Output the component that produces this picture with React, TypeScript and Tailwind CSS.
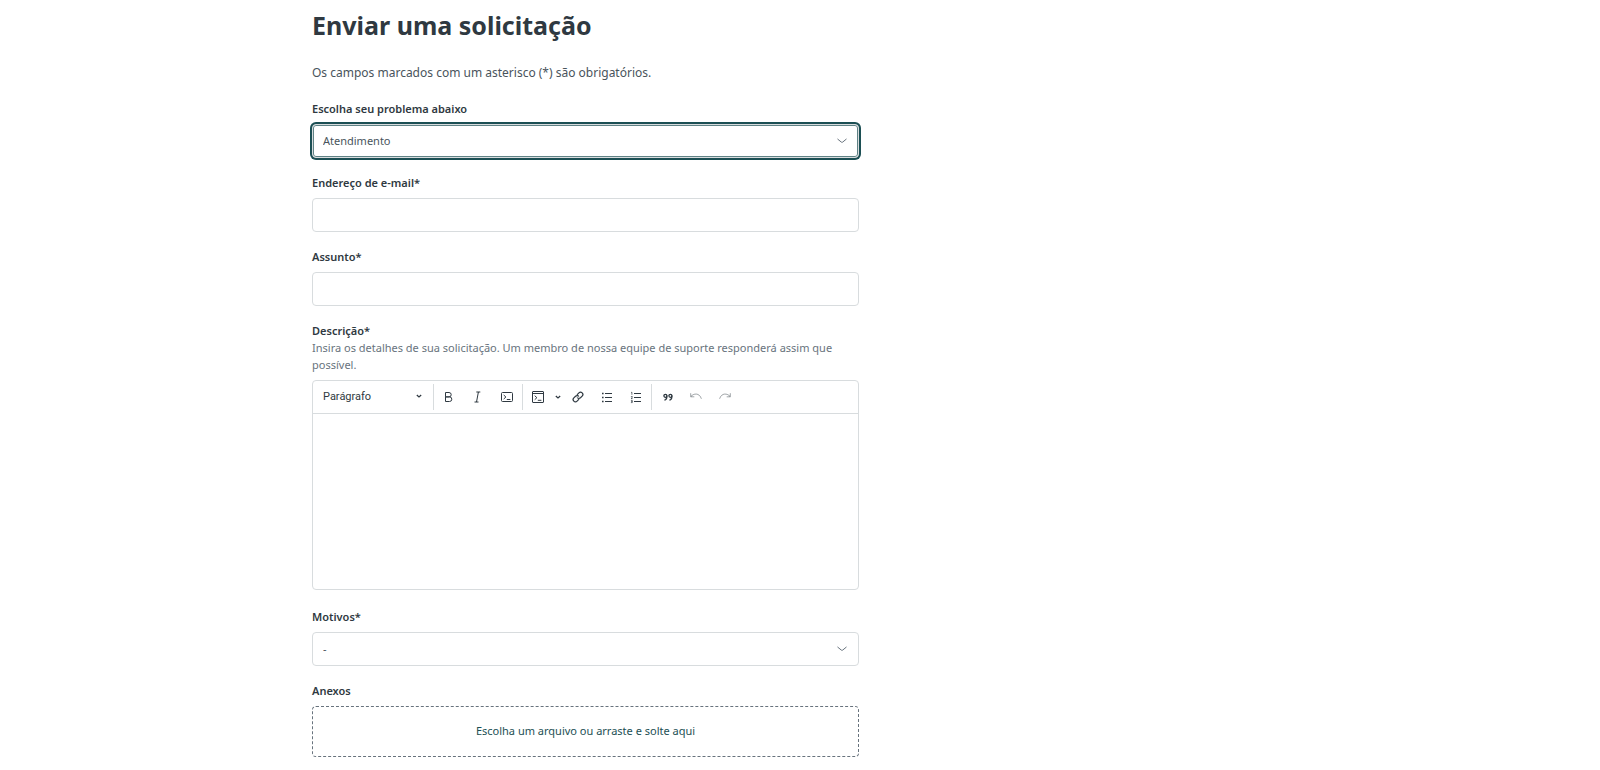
import { useState, type ReactNode, type SelectHTMLAttributes, type InputHTMLAttributes } from "react";

const boxClass =
  "block h-[34px] w-full rounded-[4px] border border-[#d8dcde] bg-white px-[10px] text-[11px] text-[#49545c] outline-none focus:border-[#1c4f54]";

function Field({ id, label, hint, children }: { id: string; label: string; hint?: string; children: ReactNode }) {
  return (
    <div className="flex flex-col">
      <label htmlFor={id} className="text-[11px] leading-[17px] font-semibold text-[#2f3941]">
        {label}
      </label>
      {hint && (
        <p id={`${id}-hint`} className="text-[11px] leading-[17px] text-[#68737d]">
          {hint}
        </p>
      )}
      <div className="mt-[7px]">{children}</div>
    </div>
  );
}

function TextField({ id, label, ...rest }: { id: string; label: string } & InputHTMLAttributes<HTMLInputElement>) {
  return (
    <Field id={id} label={label}>
      <input id={id} className={boxClass} {...rest} />
    </Field>
  );
}

function SelectField({
  id,
  label,
  options,
  active = false,
  ...rest
}: { id: string; label: string; options: string[]; active?: boolean } & SelectHTMLAttributes<HTMLSelectElement>) {
  const ring = active ? " border-[#a3b9bb] shadow-[0_0_0_2px_#1c4f54,inset_0_0_0_1px_#5f8285]" : "";
  return (
    <Field id={id} label={label}>
      <div className="relative">
        <select id={id} className={`${boxClass} appearance-none${ring}`} {...rest}>
          {options.map((o) => (
            <option key={o}>{o}</option>
          ))}
        </select>
        <svg
          className="pointer-events-none absolute top-[10px] right-[10px] size-[14px] text-[#68737d]"
          viewBox="0 0 14 14"
          fill="none"
          stroke="currentColor"
          strokeLinecap="round"
          aria-hidden="true"
        >
          <path d="M2.8 5.2l3.5 2.9c.4.3 1 .3 1.4 0l3.5-2.9" />
        </svg>
      </div>
    </Field>
  );
}

function Tool({ label, disabled, children }: { label: string; disabled?: boolean; children: ReactNode }) {
  return (
    <button
      type="button"
      aria-label={label}
      disabled={disabled}
      className="flex h-7 w-7 items-center justify-center rounded-[2px] text-[#2f3941] hover:bg-gray-100 disabled:text-[#2f3941]/45"
    >
      <svg className="size-[14px]" viewBox="0 0 14 14" fill="none" stroke="currentColor" aria-hidden="true">
        {children}
      </svg>
    </button>
  );
}

function Divider() {
  return <span className="h-[26px] w-px bg-[#d8dcde]" />;
}

function SmallChevron() {
  return (
    <svg className="size-[8px]" viewBox="0 0 8 8" fill="none" stroke="currentColor" strokeWidth="1.2" aria-hidden="true">
      <path d="M1.8 3L4 5 6.2 3" />
    </svg>
  );
}

function Editor({ id }: { id: string }) {
  return (
    <div className="mb-[2px] overflow-hidden rounded-[4px] border border-[#d8dcde]">
      <div role="toolbar" aria-label="Formatação" className="flex h-[33px] items-center gap-px border-b border-[#d8dcde]">
        <div className="relative w-[119px]">
          <select
            aria-label="Estilo do texto"
            className="h-7 w-full appearance-none bg-transparent px-[10px] font-[Roboto,sans-serif] text-[11px] text-[#2f3941] outline-none"
          >
            <option>Parágrafo</option>
            <option>Título 1</option>
            <option>Título 2</option>
          </select>
          <span className="pointer-events-none absolute top-[10px] right-[9px] text-[#2f3941]">
            <SmallChevron />
          </span>
        </div>
        <Divider />
        <Tool label="Negrito">
          <path d="M3.5 2.5H7a2.2 2.2 0 0 1 0 4.4H3.5zM3.5 6.9h4a2.3 2.3 0 0 1 0 4.6h-4z" />
        </Tool>
        <Tool label="Itálico">
          <path d="M5.3 2h4M3.5 12h4M7.4 2L5.5 12" />
        </Tool>
        <Tool label="Código">
          <rect x="1.5" y="2.5" width="11" height="9" rx="1" />
          <path d="M3.7 5l2.2 2-2.2 2M6.8 9.5h3.6" />
        </Tool>
        <Divider />
        <Tool label="Bloco de código">
          <rect x="1.5" y="1.5" width="11" height="11" rx="0.5" />
          <path d="M1.5 3.5h11M3.7 5.7l2.2 2-2.2 2M6.8 10.3h3.6" />
        </Tool>
        <button type="button" aria-label="Linguagem do código" className="flex h-7 w-[10px] items-center justify-center text-[#2f3941]">
          <SmallChevron />
        </button>
        <Tool label="Link">
          <g transform="rotate(-45 7 7)" strokeWidth="1.2">
            <path d="M6.2 9.3H3.4a2.3 2.3 0 0 1 0-4.6h2.4a2.3 2.3 0 0 1 2.2 2.6" />
            <path d="M7.8 4.7h2.8a2.3 2.3 0 0 1 0 4.6H8.2A2.3 2.3 0 0 1 6 6.7" />
          </g>
        </Tool>
        <Tool label="Lista com marcadores">
          <path d="M5 3.5h7M5 7.5h7M5 11.5h7" />
          <path d="M2 3.5h1.6M2 7.5h1.6M2 11.5h1.6" strokeWidth="1.6" />
        </Tool>
        <Tool label="Lista numerada">
          <path d="M5 3.5h7M5 7.5h7M5 11.5h7" />
          <path d="M2 2.6l.9-.4v2.6M1.9 6.6h1.4v.8L2 8.6h1.6M1.9 10.4h1.4v2.2H1.9M2.2 11.5h1" strokeWidth=".7" />
        </Tool>
        <Divider />
        <Tool label="Citação">
          <g strokeWidth="1.3">
            <circle cx="5.4" cy="5.8" r="1.5" />
            <path d="M6.9 5.4c.1 2.8-.7 4.3-2.5 4.8" />
            <circle cx="10.4" cy="5.8" r="1.5" />
            <path d="M11.9 5.4c.1 2.8-.7 4.3-2.5 4.8" />
          </g>
        </Tool>
        <Tool label="Desfazer" disabled>
          <path d="M1.7 3.2v3.6h3.6M1.9 6.5C4.5 3.2 10.5 2.6 12.4 8.8" />
        </Tool>
        <Tool label="Refazer" disabled>
          <path d="M12.3 3.2v3.6H8.7M12.1 6.5C9.5 3.2 3.5 2.6 1.6 8.8" />
        </Tool>
      </div>
      <textarea
        id={id}
        aria-describedby={`${id}-hint`}
        className="block h-[175px] w-full resize-none px-[10px] py-2 text-[11px] text-[#2f3941] outline-none"
      />
    </div>
  );
}

export default function App() {
  const [topic, setTopic] = useState("Atendimento");
  return (
    <main className="min-h-screen bg-white font-['Noto_Sans',sans-serif]">
      <div className="mx-auto max-w-[976px]">
        <h1 className="pt-[7px] text-[25px] leading-9 font-bold text-[#2f3941]">Enviar uma solicitação</h1>
        <form className="w-full max-w-[547px] pt-5 pb-3">
          <p className="text-xs leading-5 text-[#49545c]">Os campos marcados com um asterisco (*) são obrigatórios.</p>
          <div className="flex flex-col gap-4 pt-[17px]">
            <SelectField
              id="topic"
              label="Escolha seu problema abaixo"
              options={["Atendimento", "Financeiro", "Suporte técnico"]}
              value={topic}
              onChange={(e) => setTopic(e.target.value)}
              active
            />
            <TextField id="email" label="Endereço de e-mail*" type="email" required />
            <TextField id="subject" label="Assunto*" type="text" required />
            <Field
              id="description"
              label="Descrição*"
              hint="Insira os detalhes de sua solicitação. Um membro de nossa equipe de suporte responderá assim que possível."
            >
              <Editor id="description" />
            </Field>
            <SelectField id="reason" label="Motivos*" options={["-"]} required />
            <Field id="attachments" label="Anexos">
              <label
                htmlFor="attachments"
                className="relative flex h-[51px] cursor-pointer items-center justify-center rounded-[4px] border border-dashed border-[#68737d] text-[11px] text-[#1c4f54]"
              >
                Escolha um arquivo ou arraste e solte aqui
                <input id="attachments" type="file" multiple className="sr-only" />
              </label>
            </Field>
          </div>
        </form>
      </div>
    </main>
  );
}
